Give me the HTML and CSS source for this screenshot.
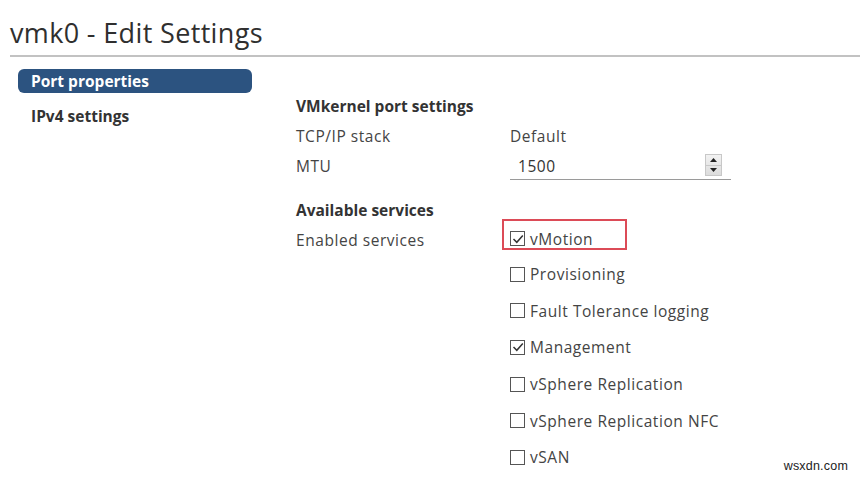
FILE: index.html
```html
<!DOCTYPE html>
<html>
<head>
<meta charset="utf-8">
<link rel="stylesheet" href="styles.css">
</head>
<body>
<div class="page">
  <h1 class="title">vmk0 - Edit Settings</h1>
  <div class="rule"></div>
  <div class="main">
    <nav class="sidebar">
      <div class="nav-item active">Port properties</div>
      <div class="nav-item">IPv4 settings</div>
    </nav>
    <section class="content">
      <div class="row heading first">VMkernel port settings</div>
      <div class="row">
        <div class="label">TCP/IP stack</div>
        <div class="value">Default</div>
      </div>
      <div class="row">
        <div class="label">MTU</div>
        <div class="input">
          <span class="input-text">1500</span>
          <span class="spinner">
            <span class="spin up"><svg width="7" height="4" viewBox="0 0 7 4"><path d="M0 4 L3.5 0 L7 4 Z" fill="#222"/></svg></span>
            <span class="spin down"><svg width="7" height="4" viewBox="0 0 7 4"><path d="M0 0 L3.5 4 L7 0 Z" fill="#222"/></svg></span>
          </span>
        </div>
      </div>
      <div class="heading second">Available services</div>
      <div class="services">
        <div class="label services-label">Enabled services</div>
        <div class="svc-list">
          <div class="svc highlight"><span class="cb checked"><svg width="12" height="12" viewBox="0 0 12 12"><path d="M1.5 6 L4.8 9.3 L10.8 2.5" fill="none" stroke="#333" stroke-width="1.5"/></svg></span>vMotion</div>
          <div class="svc"><span class="cb"></span>Provisioning</div>
          <div class="svc"><span class="cb"></span>Fault Tolerance logging</div>
          <div class="svc"><span class="cb checked"><svg width="12" height="12" viewBox="0 0 12 12"><path d="M1.5 6 L4.8 9.3 L10.8 2.5" fill="none" stroke="#333" stroke-width="1.5"/></svg></span>Management</div>
          <div class="svc"><span class="cb"></span>vSphere Replication</div>
          <div class="svc"><span class="cb"></span>vSphere Replication NFC</div>
          <div class="svc"><span class="cb"></span>vSAN</div>
        </div>
      </div>
    </section>
  </div>
  <div class="watermark">wsxdn.com</div>
</div>
</body>
</html>
```

FILE: styles.css
```css
html, body {
  margin: 0;
  padding: 0;
  background: #ffffff;
}
body {
  font-family: "Open Sans", "Noto Sans", "Liberation Sans", sans-serif;
  color: #3a3a3a;
  width: 860px;
  height: 478px;
  overflow: hidden;
}
.page {
  position: relative;
  height: 478px;
  padding-left: 10px;
}
.title {
  margin: 0;
  padding-top: 17px;
  font-size: 27px;
  line-height: 32px;
  font-weight: 400;
  color: #2f2f2f;
  letter-spacing: 0.35px;
}
.rule {
  margin-top: 6px;
  height: 2px;
  background: #c2c2c2;
}
.main {
  display: flex;
  margin-top: 12px;
}
.sidebar {
  margin-left: 8px;
  width: 234px;
  display: flex;
  flex-direction: column;
}
.nav-item {
  height: 24px;
  line-height: 24px;
  padding-left: 13px;
  font-size: 15.5px;
  font-weight: 700;
  color: #333;
  border-radius: 6px;
}
.nav-item.active {
  background: #2c5380;
  color: #ffffff;
}
.nav-item + .nav-item {
  margin-top: 11px;
}
.content {
  margin-left: 44px;
  display: flex;
  flex-direction: column;
}
.row {
  display: flex;
  align-items: center;
  height: 30px;
  font-size: 15.5px;
  letter-spacing: 0.55px;
}
.heading {
  font-weight: 700;
  font-size: 15.5px;
  letter-spacing: 0;
  color: #333;
}
.heading.first {
  margin-top: 22px;
}
.heading.second {
  margin-top: 20px;
  height: 18px;
  line-height: 18px;
}
.label {
  width: 214px;
  flex-shrink: 0;
  color: #444;
}
.value {
  color: #444;
}
.input {
  width: 221px;
  height: 27px;
  margin-top: 1px;
  border-bottom: 1px solid #9a9a9a;
  display: flex;
  align-items: center;
  justify-content: space-between;
  box-sizing: border-box;
}
.input-text {
  padding-left: 8px;
  color: #333;
}
.spinner {
  display: flex;
  flex-direction: column;
  width: 17px;
  height: 22px;
  margin-right: 9px;
  margin-top: -2px;
  border: 1px solid #c8c8c8;
  box-sizing: border-box;
  background: linear-gradient(#f2f2f2, #dcdcdc);
}
.spin {
  flex: 1;
  display: flex;
  align-items: center;
  justify-content: center;
}
.spin.up {
  border-bottom: 1px solid #c8c8c8;
}
.services {
  display: flex;
  font-size: 15.5px;
  letter-spacing: 0.55px;
}
.services-label {
  width: 206px;
  margin-top: 11px;
  line-height: 20px;
}
.svc-list {
  display: flex;
  flex-direction: column;
}
.svc {
  height: 36.6px;
  display: flex;
  align-items: center;
  padding-left: 6px;
  border: 2px solid transparent;
  box-sizing: border-box;
  color: #444;
}
.svc.highlight {
  border-color: #dc4b57;
  height: 31px;
  width: 125px;
  align-items: center;
  padding-top: 9px;
  margin-bottom: 6px;
  line-height: 18px;
}
.cb {
  width: 15px;
  height: 15px;
  border: 1.5px solid #555;
  box-sizing: border-box;
  margin-right: 5px;
  display: flex;
  align-items: center;
  justify-content: center;
  flex-shrink: 0;
  background: #fff;
}
.svc.highlight .cb {
  margin-top: -1px;
}
.watermark {
  position: absolute;
  right: 12px;
  bottom: 5px;
  font-family: "Liberation Sans", Arial, sans-serif;
  font-size: 12.5px;
  letter-spacing: 0.2px;
  color: #222;
}
```
